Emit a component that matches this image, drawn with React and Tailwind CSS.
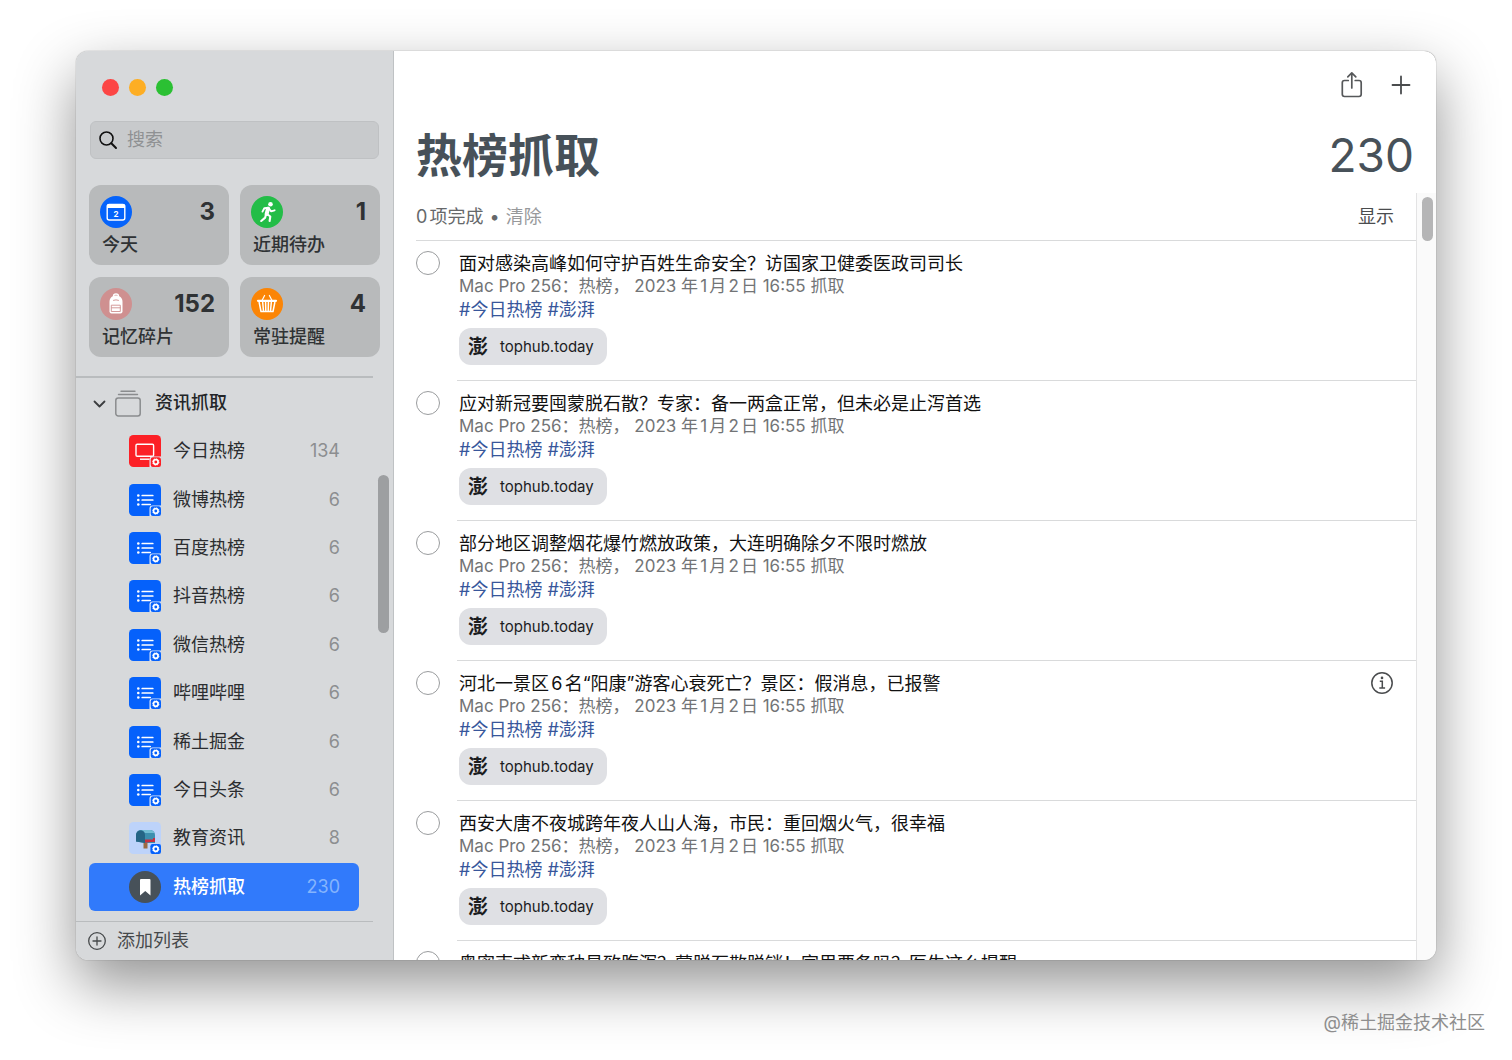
import React from "react";

const cards = [
  { label: "今天", count: 3, icon: <CalendarIcon /> },
  { label: "近期待办", count: 1, icon: <RunIcon /> },
  { label: "记忆碎片", count: 152, icon: <BackpackIcon /> },
  { label: "常驻提醒", count: 4, icon: <BasketIcon /> },
];

const lists = [
  { name: "今日热榜", count: 134, icon: <ScreenIcon /> },
  { name: "微博热榜", count: 6, icon: <ListIcon /> },
  { name: "百度热榜", count: 6, icon: <ListIcon /> },
  { name: "抖音热榜", count: 6, icon: <ListIcon /> },
  { name: "微信热榜", count: 6, icon: <ListIcon /> },
  { name: "哔哩哔哩", count: 6, icon: <ListIcon /> },
  { name: "稀土掘金", count: 6, icon: <ListIcon /> },
  { name: "今日头条", count: 6, icon: <ListIcon /> },
  { name: "教育资讯", count: 8, icon: <MailboxIcon /> },
  { name: "热榜抓取", count: 230, icon: <BookmarkIcon />, active: true },
];

const reminders = [
  { title: "面对感染高峰如何守护百姓生命安全？访国家卫健委医政司司长" },
  { title: "应对新冠要囤蒙脱石散？专家：备一两盒正常，但未必是止泻首选" },
  { title: "部分地区调整烟花爆竹燃放政策，大连明确除夕不限时燃放" },
  { title: "河北一景区6名“阳康”游客心衰死亡？景区：假消息，已报警", info: true },
  { title: "西安大唐不夜城跨年夜人山人海，市民：重回烟火气，很幸福" },
  { title: "奥密克戎新变种易致腹泻？蒙脱石散脱销！家里要备吗？医生这么提醒" },
];

function CalendarIcon() {
  return (
    <svg viewBox="0 0 32 32" className="size-8">
      <circle cx="16" cy="16" r="16" fill="#0563fb" />
      <rect x="7.200" y="8.400" width="17.600" height="15.600" rx="2" fill="none" stroke="#fff" strokeWidth="1.400" />
      <path d="M7 9.500a1.500 1.500 0 0 1 1.500-1.500h15a1.500 1.500 0 0 1 1.500 1.500V12H7z" fill="#fff" />
      <text x="16" y="20.600" textAnchor="middle" fontSize="8" fontWeight="700" fill="#fff">2</text>
    </svg>
  );
}

function RunIcon() {
  return (
    <svg viewBox="0 0 32 32" className="size-8" fill="none" stroke="#fff" strokeLinecap="round" strokeLinejoin="round">
      <circle cx="16" cy="16" r="16" fill="#23bd47" stroke="none" />
      <circle cx="19.500" cy="8.200" r="2.300" fill="#fff" stroke="none" />
      <path d="M17 12.700 15.600 18" strokeWidth="4" />
      <path d="M11.500 15.600 13.300 12.300 17.500 11.700 20 15.300 23.600 14.300" strokeWidth="1.900" />
      <path d="M15 18.300 14.200 21.600 10.200 25M16 18 19.300 20.500 18.600 25" strokeWidth="2.100" />
    </svg>
  );
}

function BackpackIcon() {
  return (
    <svg viewBox="0 0 32 32" className="size-8" fill="none">
      <circle cx="16" cy="16" r="16" fill="#cf9090" />
      <path d="M13.500 8.500V8a2.500 2 0 0 1 5 0v.500" stroke="#fff" strokeWidth="1.300" />
      <path d="M9.500 14c0-4 2.500-6.500 6.500-6.500s6.500 2.500 6.500 6.500v9.500a2 2 0 0 1-2 2h-9a2 2 0 0 1-2-2z" fill="#fff" />
      <path d="M13.500 12.300q2.500-1 5 0M11.700 17.200h8.600v6.300h-8.600zM11.700 19.800h8.600" stroke="#cf9090" strokeWidth=".9" strokeLinecap="round" strokeLinejoin="round" />
    </svg>
  );
}

function BasketIcon() {
  return (
    <svg viewBox="0 0 32 32" className="size-8" fill="none" stroke="#fff" strokeLinecap="round" strokeLinejoin="round">
      <circle cx="16" cy="16" r="16" fill="#fb8506" stroke="none" />
      <path d="M13.600 7.500 11 12.500M18.400 7.500 21 12.500" strokeWidth="1.200" />
      <path d="M7 12.800h18" strokeWidth="2.200" />
      <path d="M8.200 14.500 10 23.500h12l1.800-9M11.700 14.500l.8 8.500M14.600 14.500l.2 8.500M17.400 14.500l-.2 8.500M20.300 14.500l-.8 8.500" strokeWidth="1.500" />
    </svg>
  );
}

function GearBadge({ color }) {
  return (
    <g>
      <path d="M20.500 32v-7.500a3 3 0 0 1 3-3H32V28a4 4 0 0 1-4 4z" fill="#e4ebf8" />
      <rect x="21.700" y="22.200" width="10.300" height="9.800" rx="2.200" fill={color} />
      <circle cx="26.800" cy="27" r="2.300" fill="none" stroke="#fff" strokeWidth="1.700" />
      <circle cx="26.800" cy="27" r="3.200" fill="none" stroke="#fff" strokeWidth=".8" strokeDasharray="1.250 1.250" />
    </g>
  );
}

function ListIcon() {
  return (
    <svg viewBox="0 0 32 32" className="size-8">
      <rect width="32" height="32" rx="4.500" fill="#0561fb" />
      <path d="M13.200 11.500h10.600M13.200 16h10.600M13.200 20.500h8" stroke="#fff" strokeWidth="1.700" strokeLinecap="round" />
      <g fill="#fff">
        <circle cx="9.300" cy="11.500" r="1.300" />
        <circle cx="9.300" cy="16" r="1.300" />
        <circle cx="9.300" cy="20.500" r="1.300" />
      </g>
      <GearBadge color="#0561fb" />
    </svg>
  );
}

function ScreenIcon() {
  return (
    <svg viewBox="0 0 32 32" className="size-8">
      <rect width="32" height="32" rx="4.500" fill="#fc2026" />
      <rect x="7" y="9.300" width="17.600" height="12" rx="1.200" fill="none" stroke="#fff" strokeWidth="1.400" />
      <path d="M11 24.200h9.500" stroke="#fff" strokeWidth="1.400" />
      <GearBadge color="#fc2026" />
    </svg>
  );
}

function MailboxIcon() {
  return (
    <svg viewBox="0 0 32 32" className="size-8">
      <rect width="32" height="32" rx="4.500" fill="#bdd3fa" />
      <path d="M14.500 20h4v6.500h-4z" fill="#9a6b42" />
      <path d="M7 13a5 5 0 0 1 5-5h9a5 5 0 0 1 5 5v8H16l-9-1.500z" fill="#3d8fae" />
      <path d="M12 8h9a5 5 0 0 1 4.500 3H16a5 5 0 0 0-4-3z" fill="#72bdd3" />
      <path d="M7 13a4.500 4.500 0 0 1 9 0v8l-9-1.500z" fill="#256585" />
      <path d="M16 17.500h8v-1.500h2v4h-4l-6 .800z" fill="#c92f3f" />
      <rect x="21.400" y="22" width="10.600" height="10" rx="2.200" fill="#0561fb" />
      <circle cx="26.800" cy="27" r="2.300" fill="none" stroke="#fff" strokeWidth="1.700" />
      <circle cx="26.800" cy="27" r="3.200" fill="none" stroke="#fff" strokeWidth=".8" strokeDasharray="1.250 1.250" />
    </svg>
  );
}

function BookmarkIcon() {
  return (
    <svg viewBox="0 0 32 32" className="size-8">
      <circle cx="16" cy="16" r="16" fill="#475159" />
      <path d="M11 9a1 1 0 0 1 1-1h8.500a1 1 0 0 1 1 1v15.500l-5.250-4.500-5.250 4.500z" fill="#fff" />
    </svg>
  );
}

function Sidebar() {
  return (
    <aside className="flex w-[318px] shrink-0 flex-col border-r border-[#bfc2c4] bg-[#d7d9db]">
      <div className="flex gap-[10px] pt-7 pl-[26px]">
        <button aria-label="关闭" className="size-[17px] rounded-full bg-[#fc4645]" />
        <button aria-label="最小化" className="size-[17px] rounded-full bg-[#fdae24]" />
        <button aria-label="缩放" className="size-[17px] rounded-full bg-[#2bc033]" />
      </div>

      <label className="mx-[14px] mt-[25px] flex h-[38px] items-center gap-2 rounded-md border border-[#bfc1c3] bg-[#c8cacc] px-2">
        <svg viewBox="0 0 20 20" className="size-5 shrink-0" fill="none" stroke="#111" strokeWidth="1.600" strokeLinecap="round">
          <circle cx="7.500" cy="8.500" r="6.500" />
          <path d="m12.300 13.300 4.700 4.700" strokeWidth="2" />
        </svg>
        <input type="text" aria-label="搜索" placeholder="搜索" className="w-full min-w-0 bg-transparent text-lg outline-none placeholder:text-[#8f9193]" />
      </label>

      <div className="mx-[13px] mt-[26px] grid grid-cols-2 gap-x-[11px] gap-y-3">
        {cards.map((c) => (
          <button key={c.label} className="flex h-20 flex-col items-start rounded-xl bg-[#b8babb] pt-[11px] pr-[14px] pl-[11px] text-[#2f3234]">
            <span className="flex h-8 w-full items-center justify-between">
              {c.icon}
              <span className="text-2xl font-bold">{c.count}</span>
            </span>
            <span className="pl-[2px] text-lg leading-[34px] font-medium">{c.label}</span>
          </button>
        ))}
      </div>

      <div className="mt-[19px] mr-5 h-[2px] bg-[#b9bcbe]" />

      <div className="flex min-h-0 flex-1">
        <div className="flex flex-1 flex-col pb-[10px] pl-[13px]">
          <button className="flex h-[49px] shrink-0 items-center pl-1 text-[#232527]">
            <svg viewBox="0 0 14 14" className="size-[14px]" fill="none" stroke="#3b3d3f" strokeWidth="1.800" strokeLinecap="round" strokeLinejoin="round">
              <path d="m1.500 5.500 5 5 5-5" />
            </svg>
            <svg viewBox="0 0 28 28" className="mx-[7px] size-7" fill="none" stroke="#8a8c8e" strokeWidth="1.500" strokeLinecap="round">
              <path d="M7 2.200h14M4.500 5.500h19" strokeWidth="1.400" />
              <rect x="1.800" y="9" width="24.400" height="18" rx="2.500" />
            </svg>
            <span className="pl-[6px] text-lg font-medium">资讯抓取</span>
          </button>
          {lists.map((l) =>
            l.active ? (
              <button key={l.name} className="flex flex-1 items-center gap-3 rounded-md bg-[#317afb] pr-[19px] pl-10 text-lg text-white">
                {l.icon}
                <span className="font-medium">{l.name}</span>
                <span className="ml-auto text-[#85b4fd]">{l.count}</span>
              </button>
            ) : (
              <button key={l.name} className="flex flex-1 items-center gap-3 pr-[19px] pl-10 text-lg text-[#2b2d2f]">
                {l.icon}
                <span>{l.name}</span>
                <span className="ml-auto text-[#8c8e90]">{l.count}</span>
              </button>
            )
          )}
        </div>
        <div className="w-[34px] pt-[97px] pl-[19px]">
          <div className="h-[158px] w-[11px] rounded-full bg-[#9d9fa1]" />
        </div>
      </div>

      <button className="mr-5 flex h-[39px] shrink-0 items-center gap-[10px] border-t border-[#b9bcbe] pl-[11px] text-lg text-[#46494b]">
        <svg viewBox="0 0 20 20" className="size-5" fill="none" stroke="#46494b" strokeWidth="1.300" strokeLinecap="round">
          <circle cx="10" cy="10" r="8.300" />
          <path d="M10 6v8M6 10h8" />
        </svg>
        添加列表
      </button>
    </aside>
  );
}

function Reminder({ title, info }) {
  return (
    <li className="flex">
      <input type="checkbox" aria-label={title} className="mt-[10px] mr-[17px] size-6 shrink-0 appearance-none rounded-full border border-[#9a9c9e]" />
      <div className="flex flex-1 items-start border-b border-[#d9dadb] pt-[11px] pr-[22px] pb-[15px] pl-[2px]">
        <div className="flex-1 text-lg leading-[23px]">
          <p className="text-[#111]">{title}</p>
          <p className="text-[17px] leading-[23px] text-[#727476]">Mac Pro 256：热榜， 2023 年1月2日 16:55 抓取</p>
          <p className="text-[#37569b]">#今日热榜 #澎湃</p>
          <a href="#tophub" className="mt-[7px] flex h-[37px] w-[148px] items-center rounded-xl bg-[#dfe0e4] pl-[9px] text-[#1c1d1f]">
            <span className="w-8 text-xl font-bold">澎</span>
            <span className="text-[15px]">tophub.today</span>
          </a>
        </div>
        {info && (
          <button aria-label="详细信息">
            <svg viewBox="0 0 24 24" className="size-6" fill="none" stroke="#4a4c4e" strokeWidth="1.500">
              <circle cx="12" cy="11" r="10.200" />
              <path d="M9.800 9.300h2.500v6.500M9.300 15.900h5.800" />
              <circle cx="12" cy="5.900" r="1.300" fill="#4a4c4e" stroke="none" />
            </svg>
          </button>
        )}
      </div>
    </li>
  );
}

export default function App() {
  return (
    <div className="flex h-screen flex-col overflow-hidden bg-white px-[76px] pt-[51px] font-[Inter,'Noto_Sans_CJK_SC',sans-serif] [text-autospace:normal]">
      <div className="flex min-h-0 flex-1 overflow-hidden rounded-xl bg-white shadow-[0_0_1px_rgba(0,0,0,0.6),0_24px_60px_rgba(0,0,0,0.43)]">
        <Sidebar />
        <main className="flex min-w-0 flex-1 flex-col">
          <div className="flex shrink-0 justify-end gap-[23px] pt-5 pr-[23px]">
            <button aria-label="共享">
              <svg viewBox="0 0 28 28" className="size-7" fill="none" stroke="#56585a" strokeWidth="1.700" strokeLinecap="round" strokeLinejoin="round">
                <path d="M10.300 9.500H6.500a2.200 2.200 0 0 0-2.200 2.200v11.600a2.200 2.200 0 0 0 2.200 2.200h14.500a2.200 2.200 0 0 0 2.200-2.200V11.700a2.200 2.200 0 0 0-2.200-2.200h-3.800" />
                <path d="M13.800 17V2.200M9.800 5.900l4-4 4 4" />
              </svg>
            </button>
            <button aria-label="新建">
              <svg viewBox="0 0 24 24" className="size-6" fill="none" stroke="#4a4c4e" strokeWidth="1.800" strokeLinecap="round">
                <path d="M12 3.500v17M3.500 12h17" />
              </svg>
            </button>
          </div>
          <div className="flex h-[94px] shrink-0 items-center justify-between pt-[18px] pr-[22px] pl-[22px] text-[46px] text-[#475159]">
            <h1 className="font-bold">热榜抓取</h1>
            <span>230</span>
          </div>
          <div className="flex min-h-0 flex-1 overflow-hidden">
            <div className="min-w-0 flex-1 pl-[22px]">
              <div className="flex h-12 items-center border-b border-[#d9dadb] pr-[22px] text-lg text-[#66686a]">
                <span>0项完成</span>
                <span className="mx-[6px]">•</span>
                <button className="text-[#97999b]">清除</button>
                <button className="ml-auto text-[#4a4c4e]">显示</button>
              </div>
              <ul>
                {reminders.map((r) => (
                  <Reminder key={r.title} {...r} />
                ))}
              </ul>
            </div>
            <div className="w-5 border-l border-[#e3e3e4] bg-[#fafafa] pt-1 pl-[5px]">
              <div className="h-11 w-[11px] rounded-full bg-[#b5b5b6]" />
            </div>
          </div>
        </main>
      </div>
      <footer className="-mr-[49px] flex h-[100px] shrink-0 items-end justify-end pb-[23px] text-lg text-[#8e8e8e]">@稀土掘金技术社区</footer>
    </div>
  );
}
